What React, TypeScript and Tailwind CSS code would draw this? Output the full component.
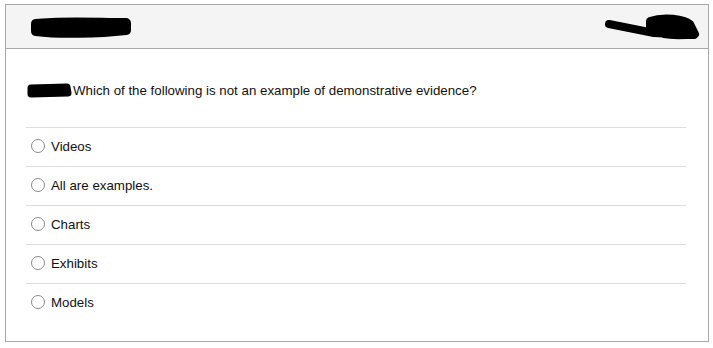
const OPTIONS = ["Videos", "All are examples.", "Charts", "Exhibits", "Models"];

function Scribble({ w, h, d, sw = 9 }: { w: number; h: number; d: string; sw?: number }) {
  return (
    <svg width={w} height={h} viewBox={`0 0 ${w} ${h}`} className="block">
      <path d={d} fill="#000" stroke="#000" strokeWidth={sw} strokeLinecap="round" strokeLinejoin="round" />
    </svg>
  );
}

function Radio() {
  return <span className="block w-[14px] h-[14px] rounded-full border border-[#8a8a8a] bg-white shrink-0" />;
}

export default function App() {
  return (
    <div className="w-[713px] h-[348px] bg-white pt-[4px] pl-[5px]" style={{ fontFamily: '"Liberation Sans", Arial, sans-serif' }}>
      <div className="w-[704px] h-[338px] border border-[#a9a9a9] flex flex-col">
        <div className="h-[44px] bg-[#f4f4f4] border-b border-[#a9a9a9] flex items-center justify-between pl-[23px] pr-[8px]">
          <Scribble w={104} h={24} sw={10} d="M7 9 C 30 6, 70 8, 97 8 L 97 15 C 70 18, 30 19, 7 16 Z" />
          <Scribble w={96} h={28} sw={8} d="M5 11 L 50 20 L 90 22 M 46 8 C 60 3, 80 6, 86 11 L 91 21 C 70 24, 55 21, 46 16 Z" />
        </div>
        <div className="pl-[20px] pr-[22px] flex flex-col">
          <div className="pt-[33px] pb-[29px] flex items-center text-[13.3px] leading-[15px] text-[#111]">
            <Scribble w={47} h={16} sw={7} d="M5 6 L 41 5 L 42 11 L 5 12 Z" />
            <span>Which of the following is not an example of demonstrative evidence?</span>
          </div>
          {OPTIONS.map(o => (
            <div key={o} className="border-t border-[#dddddd] h-[39px] pb-[2px] flex items-center pl-[5px] gap-[6px] text-[13.3px] text-[#111]">
              <Radio />
              <span className="leading-[15px]">{o}</span>
            </div>
          ))}
        </div>
      </div>
    </div>
  );
}
